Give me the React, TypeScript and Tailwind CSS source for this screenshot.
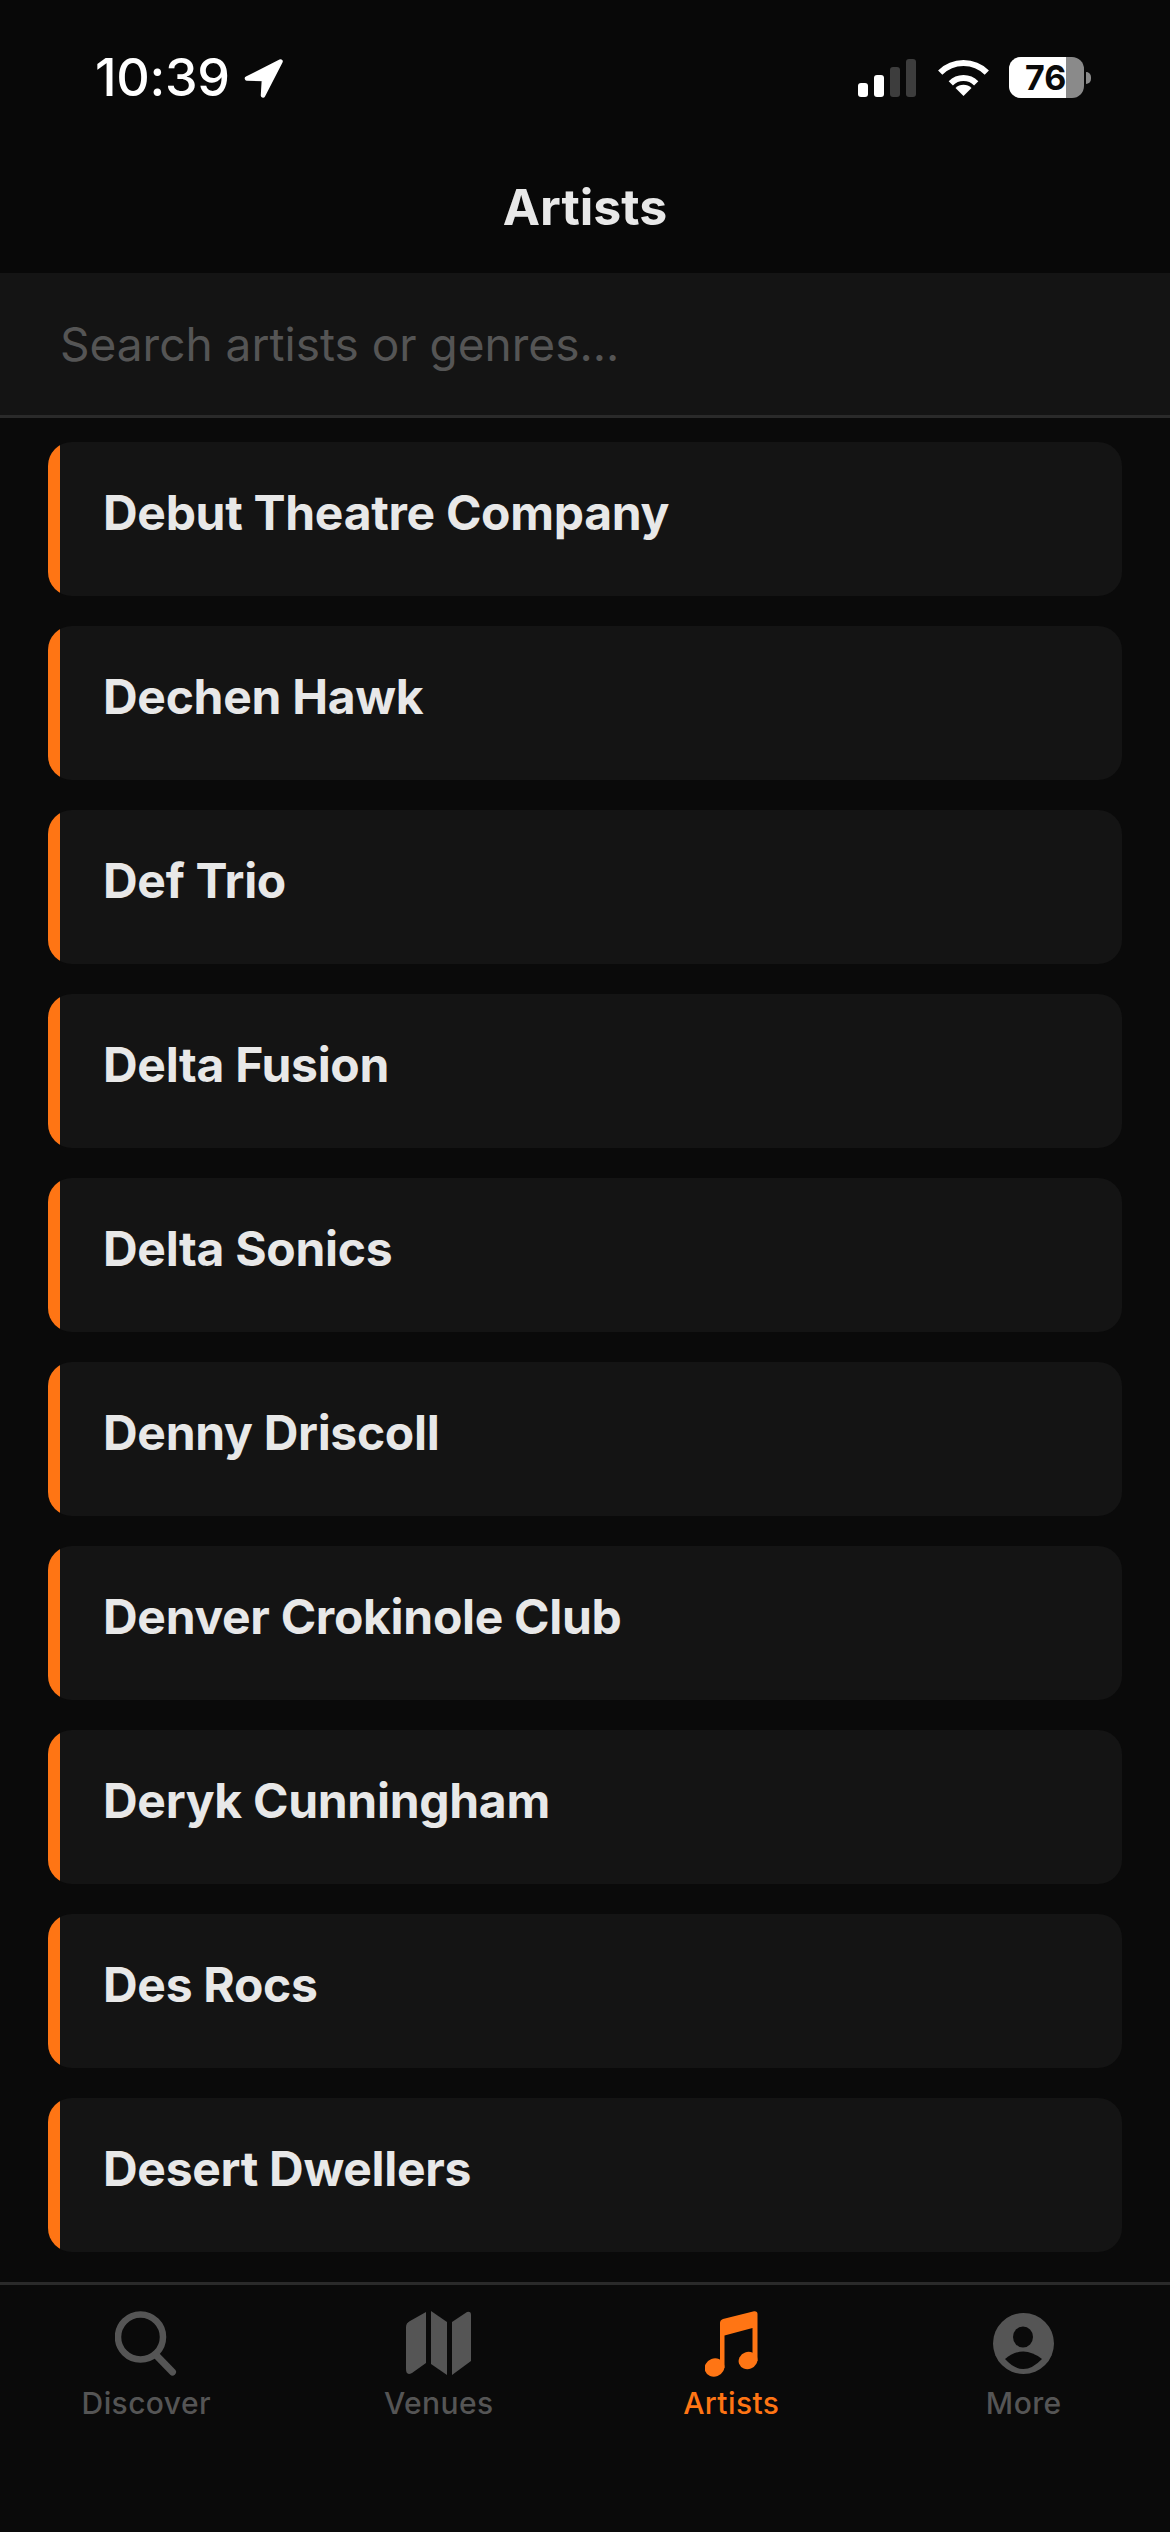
const ARTISTS = [
  'Debut Theatre Company',
  'Dechen Hawk',
  'Def Trio',
  'Delta Fusion',
  'Delta Sonics',
  'Denny Driscoll',
  'Denver Crokinole Club',
  'Deryk Cunningham',
  'Des Rocs',
  'Desert Dwellers',
];

function StatusBar() {
  return (
    <div className="flex h-[160px] items-start justify-between pl-[95px] pr-[79px] pt-[57px]">
      <div className="flex items-center gap-[14px]">
        <span className="text-[52px] leading-[42px] font-medium tracking-[-0.3px] text-white">10:39</span>
        <svg width="39" height="39" viewBox="0 0 39 39" fill="#fff">
          <path
            d="M36.5 2.5 L3 19.5 L20 20 L19 36.5 Z"
            stroke="#fff"
            strokeWidth="4.5"
            strokeLinejoin="round"
          />
        </svg>
      </div>
      <div className="flex items-center">
        {/* signal */}
        <svg width="58" height="38" viewBox="0 0 58 38" className="mr-[22px]">
          <rect x="0" y="24" width="10" height="14" rx="3" fill="#fff" />
          <rect x="16" y="16" width="10" height="22" rx="3" fill="#fff" />
          <rect x="32" y="8" width="10" height="30" rx="3" fill="#3d3d3d" />
          <rect x="48" y="0" width="10" height="38" rx="3" fill="#3d3d3d" />
        </svg>
        {/* wifi */}
        <svg width="51" height="38" viewBox="0 0 51 38" fill="none" className="mr-[20px]">
          <path d="M2.2 13.7 A33 33 0 0 1 48.8 13.7" stroke="#fff" strokeWidth="6" />
          <path d="M12.8 24.3 A18 18 0 0 1 38.2 24.3" stroke="#fff" strokeWidth="6" />
          <path d="M25.5 37 L17.5 29 A11.3 11.3 0 0 1 33.5 29 Z" fill="#fff" />
        </svg>
        {/* battery */}
        <div className="flex items-center">
          <div className="relative h-[41px] w-[75px] rounded-[12px] bg-[#8a8a8a]">
            <div className="h-full w-[57px] rounded-l-[12px] bg-white" />
            <span className="absolute left-[16px] top-0 text-[34px] leading-[41px] font-bold text-[#0a0a0a]">76</span>
          </div>
          <div className="ml-[2px] h-[12px] w-[5px] rounded-r-full bg-[#8a8a8a]" />
        </div>
      </div>
    </div>
  );
}

function TabIcon({ name, color }: { name: string; color: string }) {
  if (name === 'Discover') {
    return (
      <svg width="62" height="66" viewBox="0 0 62 66" fill="none" stroke={color}>
        <ellipse cx="25.5" cy="26" rx="22.5" ry="22.5" strokeWidth="6.5" />
        <path d="M41 44 L57.5 61" strokeWidth="7" strokeLinecap="round" />
      </svg>
    );
  }
  if (name === 'Venues') {
    return (
      <svg width="65" height="66" viewBox="0 0 65 66" fill={color}>
        <path d="M20 1 V52 L6 62 Q0 65 0 58 V16 Q0 12 4 10 Z" />
        <path d="M25 0 L41 11 V64 L25 53 Z" />
        <path d="M46 11 L61 1 Q65 0 65 4 V50 L46 64 Z" />
      </svg>
    );
  }
  if (name === 'Artists') {
    return (
      <svg width="53" height="66" viewBox="0 0 53 66" fill={color}>
        <path d="M15 12 Q15 9 18 8 L49 0.3 Q52.5 0 52.5 3 V50 H47.5 V17 L19.5 24.5 V57 H15 Z" />
        <ellipse cx="9.5" cy="56.5" rx="10" ry="9" transform="rotate(-20 9.5 56.5)" />
        <ellipse cx="43" cy="49.5" rx="9.5" ry="8.5" transform="rotate(-20 43 49.5)" />
      </svg>
    );
  }
  return (
    <svg width="61" height="66" viewBox="0 0 61 66">
      <circle cx="30.5" cy="32.5" r="30.5" fill={color} />
      <ellipse cx="30" cy="26" rx="10" ry="10.5" fill="#0a0a0a" />
      <path d="M12 48 Q30 33 49 48 Q30 68 12 48 Z" fill="#0a0a0a" />
    </svg>
  );
}

function TabBar() {
  const tabs = ['Discover', 'Venues', 'Artists', 'More'];
  return (
    <div className="grid h-[250px] grid-cols-4 border-t-[3px] border-[#2a2a2a] pt-[26px]">
      {tabs.map((tab) => {
        const active = tab === 'Artists';
        return (
          <div key={tab} className="flex flex-col items-center">
            <div className="flex h-[66px] items-center justify-center">
              <TabIcon name={tab} color={active ? '#ff7514' : '#555555'} />
            </div>
            <span
              className={
                active
                  ? 'mt-[8px] text-[30px] leading-[36px] font-medium tracking-[0.4px] text-[#ff7514]'
                  : 'mt-[8px] text-[30px] leading-[36px] font-medium tracking-[0.4px] text-[#555555]'
              }
            >
              {tab}
            </span>
          </div>
        );
      })}
    </div>
  );
}

export default function App() {
  return (
    <div className="flex h-[2532px] w-[1170px] flex-col overflow-hidden bg-[#0a0a0a] font-['Inter',sans-serif]">
      <div className="h-[273px] bg-[#080808]">
        <StatusBar />
        <h1 className="text-center text-[50px] leading-[94px] font-bold text-[#e8e8e8]">Artists</h1>
      </div>

      {/* search */}
      <div className="flex h-[145px] items-center border-b-[3px] border-[#2a2a2a] bg-[#141414] pl-[60px]">
        <span className="text-[46px] leading-[56px] text-[#555555]">Search artists or genres...</span>
      </div>

      {/* list */}
      <div className="flex flex-1 flex-col gap-[30px] px-[48px] pt-[24px]">
        {ARTISTS.map((name) => (
          <div key={name} className="flex h-[154px] shrink-0 overflow-hidden rounded-[24px] bg-[#141414]">
            <div className="w-[12px] bg-[#ff7514]" />
            <div className="pl-[43px] pt-[42px] text-[48px] leading-[58px] font-bold tracking-[-0.3px] text-[#e8e8e8]">
              {name}
            </div>
          </div>
        ))}
      </div>

      <TabBar />
    </div>
  );
}
